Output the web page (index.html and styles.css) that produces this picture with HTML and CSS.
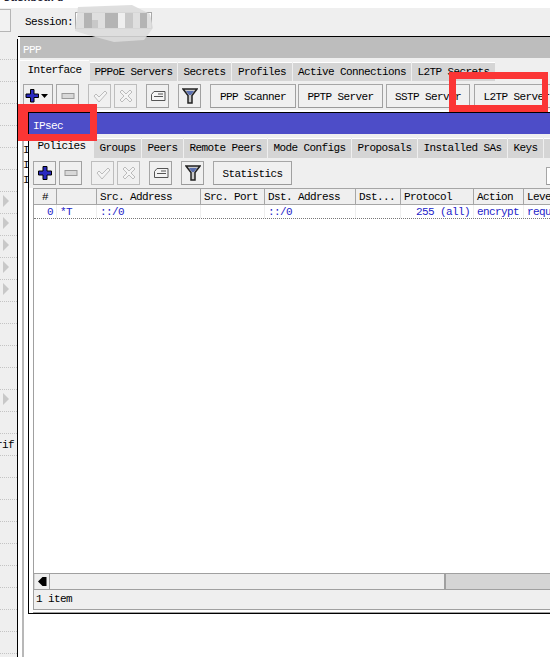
FILE: index.html
```html
<!DOCTYPE html>
<html>
<head>
<meta charset="utf-8">
<title>PPP IPsec</title>
<link rel="stylesheet" href="styles.css">
</head>
<body>
<div class="desk">
  <div class="clip-title">Dashboard</div>
  <div class="session-bar">
    <div class="stub"></div>
    <span class="session-label">Session:</span>
    <div class="session-box"></div>
  </div>
  <div class="main">
    <div class="side">
      <div class="r"></div><div class="r"></div><div class="r"></div><div class="r"></div><div class="r"></div><div class="r"></div><div class="r"></div>
      <div class="r"><i class="tri"></i></div><div class="r"><i class="tri"></i></div><div class="r"><i class="tri"></i></div><div class="r"><i class="tri"></i></div><div class="r"><i class="tri"></i></div>
      <div class="r"></div><div class="r"></div><div class="r"></div><div class="r"></div>
      <div class="r"><i class="tri"></i></div>
      <div class="r"></div>
      <div class="r rt"><span>rif</span></div>
      <div class="r"></div><div class="r"></div><div class="r"></div><div class="r"></div><div class="r"></div><div class="r"></div><div class="r"></div><div class="r"></div><div class="r"></div>
    </div>
  </div>

  <section class="win ppp">
    <header class="title grey">PPP</header>
    <nav class="tabs tabs-ppp">
      <span class="tab on w69">Interface</span>
      <span class="tab w87">PPPoE Servers</span>
      <span class="tab w53">Secrets</span>
      <span class="tab w60">Profiles</span>
      <span class="tab w118">Active Connections</span>
      <span class="tab w83">L2TP Secrets</span>
    </nav>
    <div class="bar bar-ppp">
      <button class="btn ic w30"><svg width="26" height="16" viewBox="0 0 26 16"><path class="plus" d="M5.500 1.500h3.500v4.500h4.500v3.500H9v4.500H5.500V9.500H1V6h4.500z"/><path d="M16 6h7l-3.500 4z"/></svg></button>
      <button class="btn ic w23 m3"><svg width="14" height="8" viewBox="0 0 14 8"><rect class="minus" x="1" y="1.500" width="12" height="5"/></svg></button>
      <button class="btn ic w23 m9 off"><svg width="16" height="14" viewBox="0 0 16 14"><path class="dis" d="M2 7l2-2 3 3 6-6 2 2-8 9z"/></svg></button>
      <button class="btn ic w23 m3 off"><svg width="14" height="14" viewBox="0 0 14 14"><path class="dis" d="M1 3l2-2 4 4 4-4 2 2-4 4 4 4-2 2-4-4-4 4-2-2 4-4z"/></svg></button>
      <button class="btn ic w23 m9"><svg width="16" height="12" viewBox="0 0 16 12"><path class="note" d="M4 1.500h11v9H1.500V4.500zM8 4h5M4 6.500h9"/></svg></button>
      <button class="btn ic w23 m9"><svg width="16" height="16" viewBox="0 0 16 16"><path class="fil" d="M1 1h14L10 7.500V15H6V7.500z"/><path class="fil2" d="M4 3h8L9 7H7z"/></svg></button>
      <button class="btn w86 m9">PPP Scanner</button>
      <button class="btn w85 m2">PPTP Server</button>
      <button class="btn w84 m3">SSTP Server</button>
      <button class="btn w85 m4">L2TP Server</button>
    </div>
    <div class="behind"><span>I</span><span>I</span><span>I</span></div>
  </section>

  <section class="win ipsec">
    <header class="title blue">IPsec</header>
    <nav class="tabs tabs-ipsec">
      <span class="tab on w63">Policies</span>
      <span class="tab w47">Groups</span>
      <span class="tab w41">Peers</span>
      <span class="tab w83">Remote Peers</span>
      <span class="tab w83">Mode Configs</span>
      <span class="tab w65">Proposals</span>
      <span class="tab w89">Installed SAs</span>
      <span class="tab w35">Keys</span>
      <span class="tab w35"></span>
    </nav>
    <div class="bar bar-ipsec">
      <button class="btn ic w23"><svg width="16" height="16" viewBox="0 0 16 16"><path class="plus" d="M6 1.500h4v4.500h4.500v4H10v4.500H6V10H1.500V6H6z"/></svg></button>
      <button class="btn ic w23 m3"><svg width="14" height="8" viewBox="0 0 14 8"><rect class="minus" x="1" y="1.500" width="12" height="5"/></svg></button>
      <button class="btn ic w23 m9 off"><svg width="16" height="14" viewBox="0 0 16 14"><path class="dis" d="M2 7l2-2 3 3 6-6 2 2-8 9z"/></svg></button>
      <button class="btn ic w23 m3 off"><svg width="14" height="14" viewBox="0 0 14 14"><path class="dis" d="M1 3l2-2 4 4 4-4 2 2-4 4 4 4-2 2-4-4-4 4-2-2 4-4z"/></svg></button>
      <button class="btn ic w23 m9"><svg width="16" height="12" viewBox="0 0 16 12"><path class="note" d="M4 1.500h11v9H1.500V4.500zM8 4h5M4 6.500h9"/></svg></button>
      <button class="btn ic w23 m9"><svg width="16" height="16" viewBox="0 0 16 16"><path class="fil" d="M1 1h14L10 7.500V15H6V7.500z"/><path class="fil2" d="M4 3h8L9 7H7z"/></svg></button>
      <button class="btn w79 m9">Statistics</button>
      <button class="btn find"></button>
    </div>
    <div class="frame">
      <div class="grid head">
        <span class="c c23 ctr">#</span>
        <span class="c c40"></span>
        <span class="c c104">Src. Address</span>
        <span class="c c64">Src. Port</span>
        <span class="c c91">Dst. Address</span>
        <span class="c c45">Dst...</span>
        <span class="c c73">Protocol</span>
        <span class="c c50">Action</span>
        <span class="c c60">Level</span>
      </div>
      <div class="grid row">
        <span class="c c23 end">0</span>
        <span class="c c40">*T</span>
        <span class="c c104">::/0</span>
        <span class="c c64"></span>
        <span class="c c91">::/0</span>
        <span class="c c45"></span>
        <span class="c c73 end">255 (all)</span>
        <span class="c c50">encrypt</span>
        <span class="c c60">require</span>
      </div>
      <div class="list"></div>
      <div class="scroll">
        <span class="arrow"><svg width="9" height="9" viewBox="0 0 9 9"><path d="M0 4.500L4.500 0H8.500V9H4.500z"/></svg></span>
        <span class="thumb"></span>
        <span class="track"></span>
      </div>
      <div class="status">1 item</div>
    </div>
  </section>

  <div class="mark mark-a"></div>
  <div class="mark mark-b"></div>

  <svg class="blur" width="86" height="42" viewBox="0 0 86 42">
    <path class="smear" d="M6 3L60 1L78 10L81 24L72 36L42 38L16 31L3 27z"/>
    <rect class="p1" x="12" y="9" width="8" height="15"/>
    <rect class="p2" x="20" y="16" width="6" height="8"/>
    <rect class="p1" x="33" y="9" width="13" height="15"/>
    <rect class="p3" x="46" y="9" width="7" height="15"/>
    <rect class="p2" x="53" y="9" width="8" height="15"/>
    <rect class="p1" x="68" y="9" width="7" height="15"/>
  </svg>
</div>
</body>
</html>
```
FILE: styles.css
```css
* { box-sizing: border-box; }
html, body { margin: 0; padding: 0; background: #fff; overflow: hidden; }
body { width: 550px; height: 657px; }
.desk {
  position: relative;
  width: 550px;
  height: 657px;
  overflow: hidden;
  font: 11px/14px "Liberation Mono", monospace;
  letter-spacing: -0.6px;
  color: #000;
}
.clip-title { height: 9px; margin-top: -6px; overflow: hidden; line-height: 9px; font-weight: 700; padding-left: 4px; color: #223; letter-spacing: 0; }
.session-bar {
  height: 31px;
  margin-top: 5px;
  background: #efefef;
  display: flex;
  align-items: center;
  padding-bottom: 6px;
}
.stub { width: 11px; height: 23px; border: 1px solid #b5b5b5; border-left: 0; margin-right: 14px; background: #f2f2f2; }
.session-label { width: 50px; padding-top: 2px; }
.session-box { width: 77px; height: 17px; border: 1px solid #a8a8a8; background: #fff; }
.main { height: 618px; }
.side { width: 18px; height: 618px; background: #efefef; border-right: 1px solid #000; }
.r { height: 22px; border-bottom: 1px dotted #c4c4c4; position: relative; }
.r:first-child { height: 21px; }
.tri { position: absolute; left: 3px; top: 3px; width: 0; height: 0; border-left: 6px solid #c8c8c8; border-top: 6px solid transparent; border-bottom: 6px solid transparent; }
.rt span { position: absolute; right: 3px; top: 4px; }

.win { position: absolute; background: #fff; overflow: hidden; }
.ppp { left: 18px; top: 36px; width: 560px; height: 640px; border-top: 1px solid #000; padding-left: 2px; }
.ppp::before { content: ""; position: absolute; left: 4px; top: 71px; bottom: 0; width: 2px; background: #b8b8b8; }
.ipsec { left: 28px; top: 112px; width: 560px; height: 502px; border: 1px solid #000; border-right: 0; }
.title { height: 21px; color: #fff; padding: 6px 0 0 3px; }
.grey { background: #bdbdbd; }
.blue { background: #4d4dc8; padding: 6px 0 0 4px; }
.tabs { display: flex; background: #efefef; align-items: flex-end; }
.tabs-ppp { height: 24px; padding-bottom: 1px; }
.tabs-ipsec { height: 25px; padding: 0 0 1px 1px; }
.tab { height: 19px; margin-right: 1px; background: #d5d5d5; border-top: 1px solid #fff; text-align: center; line-height: 18px; white-space: nowrap; flex: none; }
.tab.on { height: 21px; background: #efefef; line-height: 19px; }
.tabs-ipsec .tab { height: 20px; }
.tabs-ipsec .tab.on { height: 22px; }
.w69 { width: 69px; } .w87 { width: 87px; } .w53 { width: 53px; } .w60 { width: 60px; } .w118 { width: 118px; } .w83 { width: 83px; }
.w63 { width: 63px; } .w47 { width: 47px; } .w41 { width: 41px; } .w65 { width: 65px; } .w89 { width: 89px; } .w35 { width: 35px; }
.bar { display: flex; background: #efefef; align-items: flex-start; }
.bar-ppp { height: 28px; padding: 2px 0 0 3px; }
.bar-ipsec { height: 29px; padding: 2px 0 0 4px; }
.btn {
  flex: none;
  height: 24px;
  padding: 0;
  margin: 0;
  font: inherit;
  letter-spacing: inherit;
  color: inherit;
  background: #f0f0f0;
  border: 1px solid #a6a6a6;
  border-right-color: #a0a0a0;
  border-bottom-color: #9a9a9a;
  display: flex;
  align-items: center;
  justify-content: center;
  white-space: nowrap;
}
.btn:not(.ic) { padding-top: 2px; }
.w23 { width: 23px; } .w30 { width: 30px; } .w86 { width: 86px; } .w85 { width: 85px; } .w84 { width: 84px; } .w79 { width: 79px; }
.m2 { margin-left: 2px; } .m3 { margin-left: 3px; } .m4 { margin-left: 4px; } .m9 { margin-left: 9px; }
.off { border-color: #bdbdbd; }
.find { width: 30px; height: 18px; margin: 6px 0 0 254px; background: #fff; }
.plus { fill: #2929c0; stroke: #000; stroke-width: 1; }
.minus { fill: #d8d8d8; stroke: #9a9a9a; stroke-width: 1; }
.dis { fill: #f4f4f4; stroke: #bcbcbc; stroke-width: 1; }
.note { fill: #f4f4f4; stroke: #555; stroke-width: 1; }
.fil { fill: #c9c9c9; stroke: #222; stroke-width: 1.500; }
.fil2 { fill: #5a6fb0; }
.behind { position: absolute; left: 5px; top: 106px; display: flex; flex-direction: column; gap: 1px; }

.frame { margin-left: 4px; height: 422px; border-left: 1px solid #a0a0a0; border-bottom: 1px solid #a0a0a0; background: #efefef; box-shadow: 0 2px 0 0 #fff, 0 3px 0 0 #a0a0a0; }
.grid { display: flex; }
.head { height: 17px; background: #efefef; border-top: 1px solid #a6a6a6; border-bottom: 1px solid #a6a6a6; }
.row { height: 14px; background: #fff; color: #2323c8; border-bottom: 1px dotted #777; }
.c { flex: none; padding: 0 3px; line-height: 16px; white-space: nowrap; overflow: hidden; }
.head .c { border-right: 1px solid #a6a6a6; }
.row .c { line-height: 14px; border-right: 1px solid #eee; }
.ctr { text-align: center; }
.end { text-align: right; }
.c23 { width: 23px; } .c40 { width: 40px; } .c104 { width: 104px; } .c64 { width: 64px; } .c91 { width: 91px; } .c45 { width: 45px; } .c73 { width: 73px; } .c50 { width: 50px; } .c60 { width: 60px; }
.list { height: 354px; background: #fff; }
.scroll { display: flex; height: 17px; border-top: 1px solid #a0a0a0; border-bottom: 1px solid #a0a0a0; padding-left: 1px; background: #d5d5d5; }
.arrow { width: 15px; background: #efefef; border-right: 1px solid #a0a0a0; display: flex; align-items: center; justify-content: center; }
.thumb { width: 396px; background: #efefef; border-right: 2px solid #a0a0a0; }
.track { flex: 1; }
.status { height: 19px; padding: 2px 0 0 2px; }

.mark { position: absolute; border-style: solid; border-color: #fb3535; }
.mark-a { left: 18px; top: 104px; width: 79px; height: 37px; border-width: 8px 7px 7px 10px; }
.mark-b { left: 449px; top: 72px; width: 99px; height: 40px; border-width: 7px 6px 7px 7px; }

.blur { position: absolute; left: 72px; top: 4px; }
.smear { fill: #dcdcdc; opacity: .9; }
.p1 { fill: #b4b4b4; }
.p2 { fill: #c8c8c8; }
.p3 { fill: #efefef; }
```
